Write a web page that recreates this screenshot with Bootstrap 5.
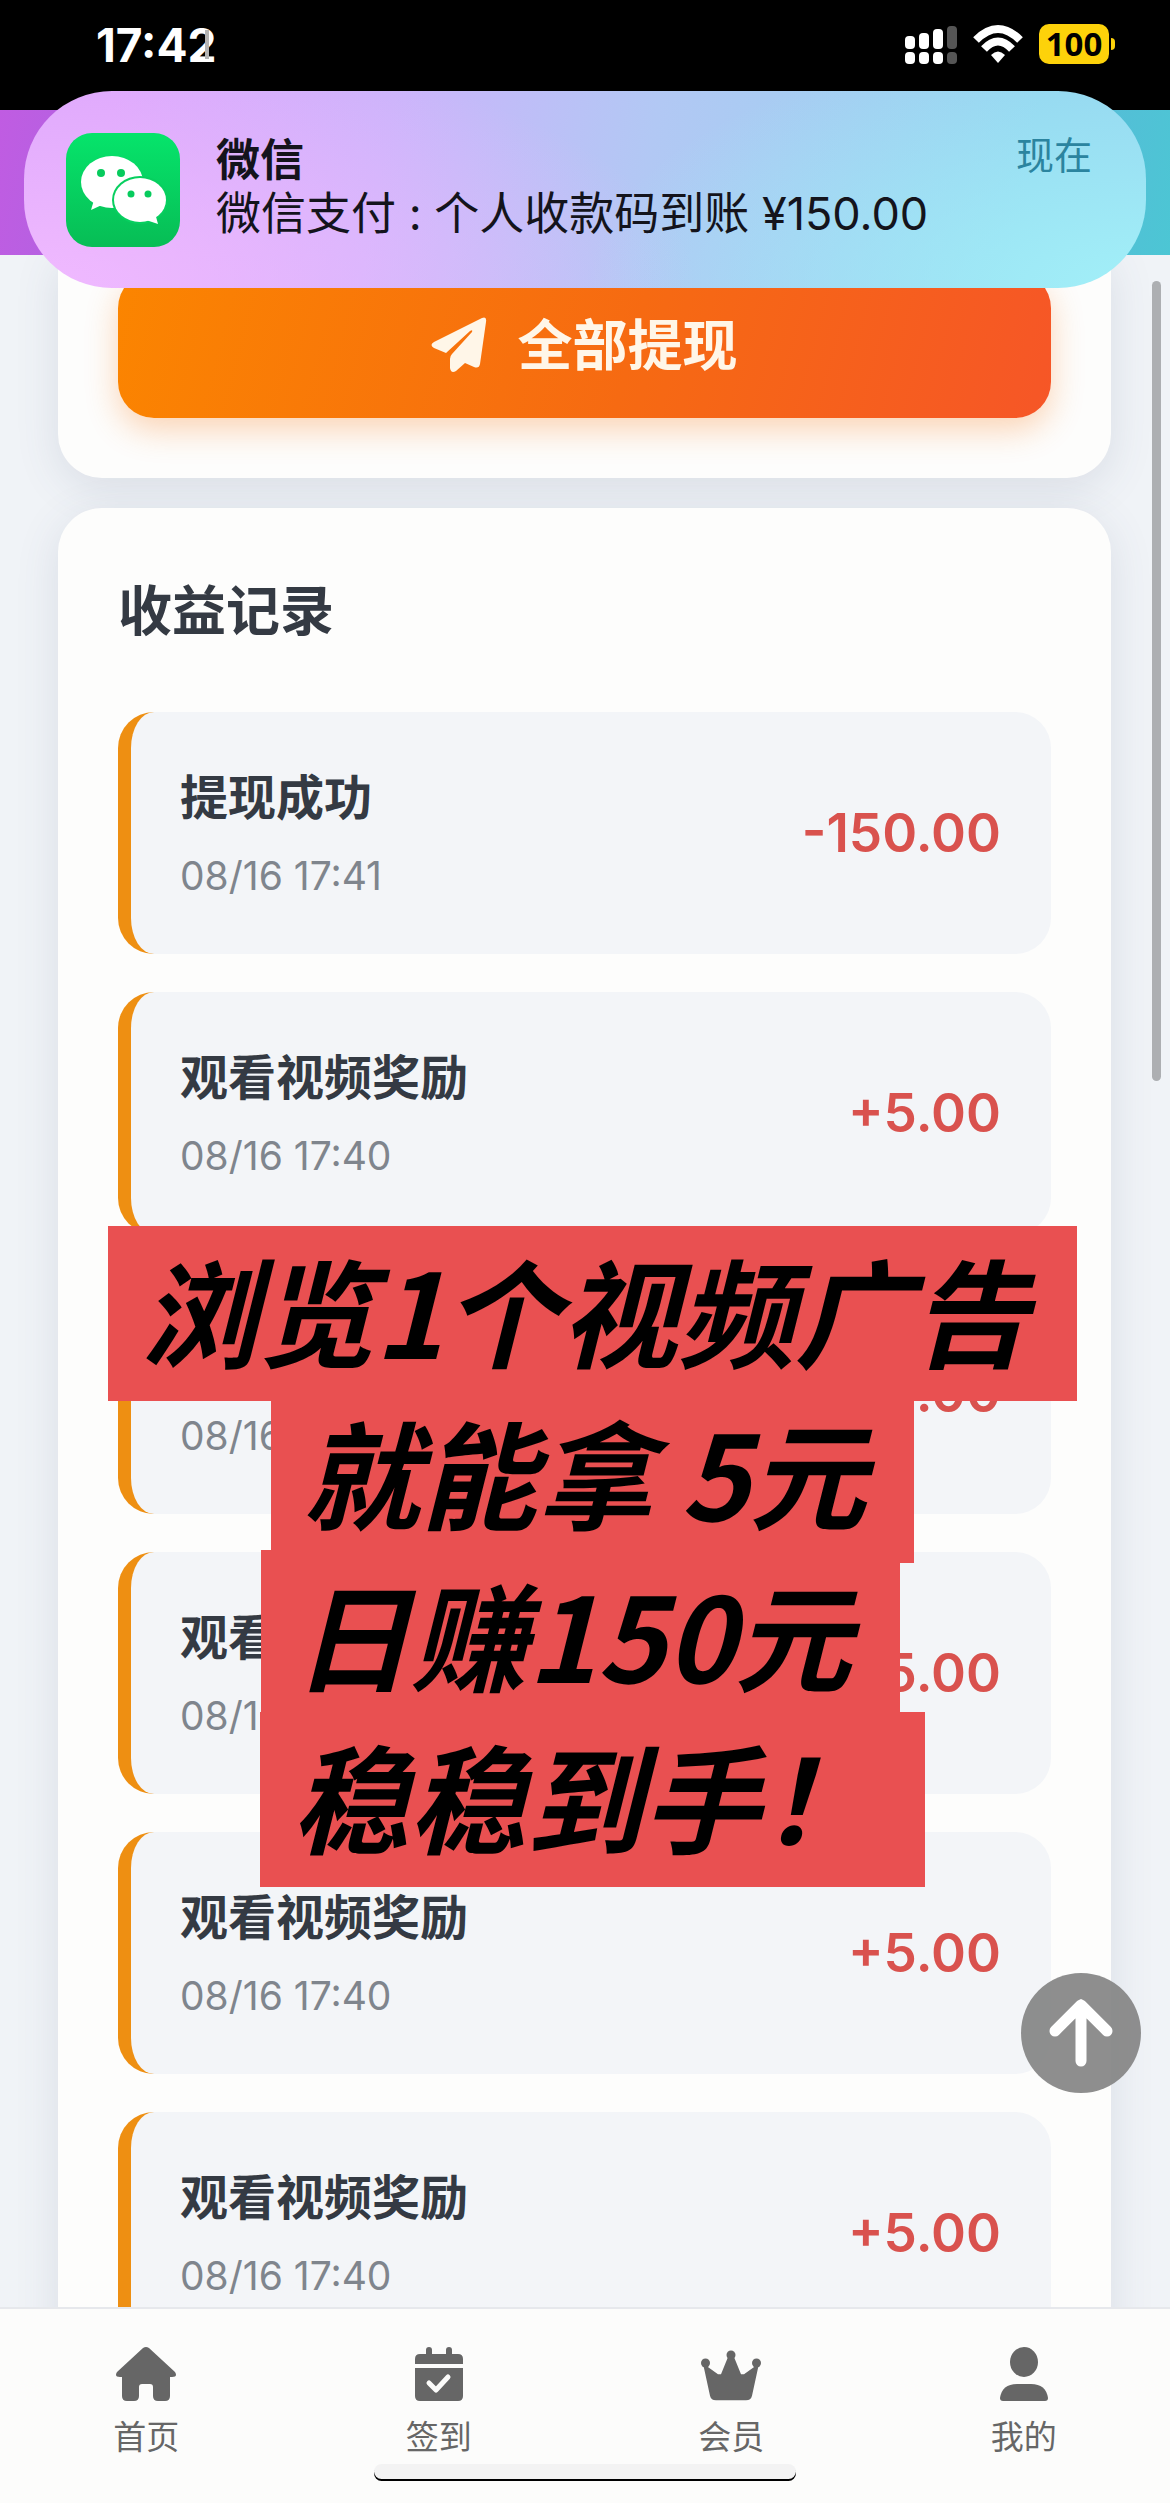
<!DOCTYPE html>
<html lang="zh-CN">
<head>
<meta charset="utf-8">
<meta name="viewport" content="width=device-width, initial-scale=1">
<title>收益记录</title>
<link href="https://cdn.jsdelivr.net/npm/bootstrap@5.3.0/dist/css/bootstrap.min.css" rel="stylesheet">
<style>
body{font-family:Inter,"Noto Sans CJK SC",sans-serif;background:#f0f3f7;color:#343a43}
.status{height:110px;background:#000;padding:21px 61px 0 96px}
.clock{font-size:46px;line-height:48px;font-weight:700;color:#fff}
.clock::after{content:"";position:absolute;right:7px;top:9px;width:4px;height:29px;background:#b4b4b4}
.signals{padding-top:3px}
.batt{width:70px;height:40px;border-radius:10px;background:#fdd20a;color:#000;font:700 33px/40px "Noto Sans",sans-serif}
.batt::after{content:"";position:absolute;left:72px;top:14px;width:4px;height:12px;border-radius:0 6px 6px 0;background:#fdd20a}
.band{height:145px;background:linear-gradient(100deg,#c05ce2,#a06be0 20%,#62b0dc 80%,#4cc6d4)}
.feed{min-height:0;padding:0 59px 0 58px}
.panel{background:#fdfdfc;border-radius:44px;box-shadow:0 10px 44px rgba(70,85,115,.13);padding:62px 60px 60px}
.panel-cut{border-radius:0 0 44px 44px;padding-top:17px;margin-bottom:30px}
.cash{height:146px;border:0;border-radius:36px;background:linear-gradient(105deg,#fb8500,#f66a12 55%,#f65627);box-shadow:0 12px 32px rgba(250,120,20,.3);color:#fff6e8;font-size:55px;font-weight:600;gap:30px}
.head2{font-size:54px;line-height:84px;font-weight:600;margin-bottom:58px}
.records{gap:38px}
.record{background:#f3f5f8;border-left:13px solid #ee8f12;border-radius:36px;padding:48px 50px 48px 49px}
.what{font-size:48px;line-height:76px;font-weight:600;margin-bottom:10px}
.when{font-size:39px;line-height:60px;color:#7f858d}
.amount{font-size:53px;line-height:64px;font-weight:600;color:#d9524e}
.tabs{background:#fcfcfb;border-top:2px solid #e6e8ec;height:196px;padding-top:38px}
.tabs a{color:#666;font-size:33px;line-height:48px;gap:12px}
.notice{left:24px;right:24px;top:91px;padding:42px 54px 41px 42px;border-radius:88px;color:#14141c;gap:36px;
background:radial-gradient(ellipse 60% 130% at 0% 100%,#f0baff 0%,rgba(240,186,255,0) 100%),radial-gradient(ellipse 50% 130% at 100% 100%,#a2f0f8 0%,rgba(162,240,248,0) 100%),linear-gradient(100deg,#dca6fc 8%,#cbb4fb 32%,#b2c8f4 55%,#94d4ef 88%)}
.notice-t{font-size:44px;line-height:54px;font-weight:600}
.notice-b{font-size:45px;line-height:54px}
.notice-w{font-size:38px;line-height:44px;color:#2b849f}
.thumb{right:9px;top:281px;width:9px;height:800px;border-radius:5px;background:#adafb2}
.totop{right:29px;top:1973px;width:120px;height:120px;border:0;border-radius:50%;background:rgba(132,132,132,.92)}
.promo{top:1226px;left:0;right:0;padding-left:15px;font:italic 700 117px/162px "Noto Sans CJK SC",sans-serif;color:#000}
.promo span{background:#e95051;height:175px;line-height:164px;padding:0 48px 0 32px;margin-bottom:-13px;white-space:pre}
.homebar{left:32%;right:32%;bottom:24px;height:15px;border-radius:9px;background:#f3f3f3;box-shadow:0 2px 0 #000}
</style>
<script src="https://cdn.jsdelivr.net/npm/bootstrap@5.3.0/dist/js/bootstrap.bundle.min.js"></script>
</head>
<body>
<div class="d-flex flex-column vh-100 position-relative overflow-hidden">
  <header>
    <div class="status d-flex justify-content-between align-items-start">
      <div class="clock position-relative">17:42</div>
      <div class="signals d-flex align-items-center">
        <svg width="52" height="40" viewBox="0 0 52 40" class="me-3" aria-hidden="true"><g fill="#fff"><rect y="12" width="10" height="13" rx="4"/><rect x="14" y="9" width="10" height="16" rx="4"/><rect x="28" y="5" width="10" height="20" rx="4"/><rect y="28" width="10" height="12" rx="4"/><rect x="14" y="28" width="10" height="12" rx="4"/><rect x="28" y="28" width="10" height="12" rx="4"/></g><g fill="#555"><rect x="42" y="2" width="10" height="23" rx="4"/><rect x="42" y="28" width="10" height="12" rx="4"/></g></svg>
        <svg width="50" height="38" viewBox="0 0 50 38" class="me-3" aria-hidden="true"><g fill="none" stroke="#fff" stroke-width="8"><path d="M3 15Q25-7 47 15"/><path d="M11 24Q25 9 39 24"/></g><path d="M18 30Q25 23 32 30L25 38Z" fill="#fff"/></svg>
        <div class="batt position-relative text-center">100</div>
      </div>
    </div>
    <div class="band"></div>
  </header>

  <main class="feed flex-grow-1 overflow-hidden">
    <section class="panel panel-cut">
      <button type="button" class="cash w-100 d-flex align-items-center justify-content-center">
        <svg width="56" height="56" viewBox="0 0 56 56" fill="currentColor" aria-hidden="true"><path d="M51 1Q56-1 55 5L49 47Q48 52 43 50L34 46L25 54Q20 57 19 51V42Q19 39 21 37L41 15Q42 12 39 14L15 36L3 31Q-2 28 3 25Z"/></svg>
        全部提现
      </button>
    </section>
    <section class="panel">
      <h2 class="head2">收益记录</h2>
      <ul class="records list-unstyled d-flex flex-column mb-0">
        <li class="record d-flex justify-content-between align-items-center"><div><div class="what">提现成功</div><div class="when">08/16 17:41</div></div><div class="amount">-150.00</div></li>
        <li class="record d-flex justify-content-between align-items-center"><div><div class="what">观看视频奖励</div><div class="when">08/16 17:40</div></div><div class="amount">+5.00</div></li>
        <li class="record d-flex justify-content-between align-items-center"><div><div class="what">观看视频奖励</div><div class="when">08/16 17:40</div></div><div class="amount">+5.00</div></li>
        <li class="record d-flex justify-content-between align-items-center"><div><div class="what">观看视频奖励</div><div class="when">08/16 17:40</div></div><div class="amount">+5.00</div></li>
        <li class="record d-flex justify-content-between align-items-center"><div><div class="what">观看视频奖励</div><div class="when">08/16 17:40</div></div><div class="amount">+5.00</div></li>
        <li class="record d-flex justify-content-between align-items-center"><div><div class="what">观看视频奖励</div><div class="when">08/16 17:40</div></div><div class="amount">+5.00</div></li>
      </ul>
    </section>
  </main>

  <nav class="tabs position-relative flex-shrink-0 d-flex align-items-start">
    <a href="#" class="col-3 d-flex flex-column align-items-center text-decoration-none"><svg width="60" height="54" viewBox="0 0 60 54" fill="currentColor" aria-hidden="true"><path d="M27 1Q30-1 33 1L59 25Q62 30 56 30H54V49Q54 54 49 54H42Q37 54 37 49V40Q37 37 34 37H26Q23 37 23 40V49Q23 54 18 54H11Q6 54 6 49V30H4Q-2 30 1 25Z"/></svg>首页</a>
    <a href="#" class="col-3 d-flex flex-column align-items-center text-decoration-none"><svg width="48" height="54" viewBox="0 0 48 54" fill="currentColor" aria-hidden="true"><rect x="11" width="6" height="12" rx="3"/><rect x="31" width="6" height="12" rx="3"/><path d="M0 17V12Q0 7 5 7H43Q48 7 48 12V17ZM0 21H48V49Q48 54 43 54H5Q0 54 0 49Z"/><path d="M14 36L21 43L33 30" fill="none" stroke="#fcfcfb" stroke-width="5" stroke-linecap="round" stroke-linejoin="round"/></svg>签到</a>
    <a href="#" class="col-3 d-flex flex-column align-items-center text-decoration-none"><svg width="60" height="54" viewBox="0 0 60 54" fill="currentColor" aria-hidden="true"><circle cx="4.500" cy="16" r="4.500"/><circle cx="30" cy="8" r="4.500"/><circle cx="55.500" cy="16" r="4.500"/><path d="M27 9H33L40 28L43 28L58 16L51 52Q50 57 45 57H15Q10 57 9 52L2 16L17 28L20 28Z" transform="translate(0 2) scale(1 .9)"/></svg>会员</a>
    <a href="#" class="col-3 d-flex flex-column align-items-center text-decoration-none"><svg width="48" height="54" viewBox="0 0 48 54" fill="currentColor" aria-hidden="true"><ellipse cx="24" cy="15" rx="14" ry="15"/><path d="M0 51Q2 37 17 37H31Q46 37 48 51Q48 54 45 54H3Q0 54 0 51Z"/></svg>我的</a>
    <div class="homebar position-absolute"></div>
  </nav>

  <div class="notice position-absolute d-flex align-items-start" role="status">
    <svg width="114" height="114" viewBox="0 0 114 114" aria-hidden="true"><defs><linearGradient id="wx" x1="0" y1="0" x2="0" y2="1"><stop offset="0" stop-color="#06e46b"/><stop offset="1" stop-color="#07bd55"/></linearGradient></defs><rect width="114" height="114" rx="26" fill="url(#wx)"/><ellipse cx="46" cy="49" rx="31" ry="26" fill="#fff"/><path d="M28 67L25 77L38 71Z" fill="#fff"/><ellipse cx="74" cy="67" rx="28" ry="24" fill="#07cf5f"/><ellipse cx="74" cy="67" rx="26" ry="22" fill="#fff"/><path d="M80 87L92 91L89 80Z" fill="#fff"/><g fill="#07cb5d"><circle cx="35" cy="40" r="4"/><circle cx="55" cy="40" r="4"/><circle cx="65" cy="61" r="3.500"/><circle cx="82" cy="61" r="3.500"/></g></svg>
    <div class="flex-grow-1">
      <div class="d-flex justify-content-between align-items-start"><div class="notice-t">微信</div><div class="notice-w">现在</div></div>
      <div class="notice-b text-nowrap">微信支付 : 个人收款码到账 ¥150.00</div>
    </div>
  </div>

  <div class="promo position-absolute d-flex flex-column align-items-center"><span>浏览1个视频广告</span><span>就能拿 5元</span><span class="me-4">日赚150元</span><span>稳稳到手！</span></div>
  <div class="thumb position-absolute"></div>
  <button type="button" class="totop position-absolute d-flex align-items-center justify-content-center" aria-label="返回顶部"><svg width="64" height="70" viewBox="0 0 64 70" fill="none" stroke="#fff" stroke-width="11" stroke-linecap="round" stroke-linejoin="round" aria-hidden="true"><path d="M32 7V63M6 33L32 7L58 33"/></svg></button>
</div>
</body>
</html>
